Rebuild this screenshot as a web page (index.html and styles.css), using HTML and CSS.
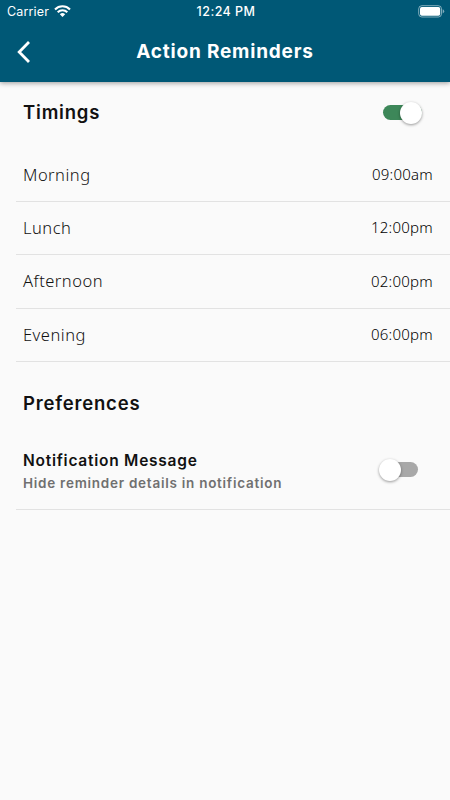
FILE: index.html
```html
<!DOCTYPE html>
<html lang="en">
<head>
    <meta charset="UTF-8">
    <meta name="viewport" content="width=device-width, initial-scale=1.0">
    <title>Action Reminders</title>
    <link rel="stylesheet" href="styles.css">
</head>
<body>
    <header class="header">
        <div class="status-bar">
            <div class="carrier">
                <span class="carrier-name">Carrier</span>
                <svg class="wifi" width="17" height="12" viewBox="0 0 17 12" fill="none" stroke="#fff" stroke-width="2.1">
                    <path d="M1 4.4C5.2 .2 11.8 .2 16 4.4"/>
                    <path d="M3.7 7.2C6.4 4.5 10.6 4.5 13.3 7.2"/>
                    <path d="M8.5 12L5.8 9.2Q8.5 7 11.2 9.2Z" fill="#fff" stroke="none"/>
                </svg>
            </div>
            <span class="clock">12:24 PM</span>
            <svg class="battery" width="27" height="13" viewBox="0 0 27 13">
                <rect x=".7" y=".7" width="22.8" height="11.3" rx="3.2" fill="none" stroke="#fff" stroke-opacity=".5"/>
                <rect x="2" y="2" width="20.2" height="8.7" rx="1.8" fill="#fff"/>
                <path d="M24.7 4.3Q26.2 5 26.2 6.3T24.7 8.4Z" fill="#fff" fill-opacity=".5"/>
            </svg>
        </div>
        <div class="nav-bar">
            <svg class="back" width="16" height="24" viewBox="0 0 16 24" fill="none" stroke="#fff" stroke-width="2.8">
                <path d="M13 2L3.2 12L13 22"/>
            </svg>
            <h1>Action Reminders</h1>
        </div>
    </header>
    <main>
        <div class="section-head">
            <h2>Timings</h2>
            <div class="switch on"><span class="knob"></span></div>
        </div>
        <ul class="times">
            <li><span class="label">Morning</span><span class="time">09:00am</span></li>
            <li><span class="label">Lunch</span><span class="time">12:00pm</span></li>
            <li><span class="label">Afternoon</span><span class="time">02:00pm</span></li>
            <li><span class="label">Evening</span><span class="time">06:00pm</span></li>
        </ul>
        <div class="section-head preferences-head">
            <h2>Preferences</h2>
        </div>
        <div class="preference">
            <div>
                <h3>Notification Message</h3>
                <p>Hide reminder details in notification</p>
            </div>
            <div class="switch"><span class="knob"></span></div>
        </div>
    </main>
</body>
</html>
```

FILE: styles.css
```css
* {
    box-sizing: border-box;
}

body {
    margin: 0;
    min-height: 100vh;
    background-color: #fafafa;
    color: #111;
    font-family: Inter, sans-serif;
}

h1, h2, h3, p, ul {
    margin: 0;
    padding: 0;
}

.header {
    height: 82px;
    background-color: #005876;
    color: #fff;
    box-shadow: 0 1px 5px rgba(0, 0, 0, 0.4);
}

.status-bar {
    display: grid;
    grid-template-columns: 1fr auto 1fr;
    align-items: center;
    height: 22px;
    padding: 0 5px 0 7px;
}

.carrier {
    display: flex;
    align-items: center;
    gap: 5px;
}

.carrier-name {
    font-size: 12.5px;
    letter-spacing: 0.15px;
}

.clock {
    font-size: 12.5px;
    font-weight: 500;
    letter-spacing: 0.45px;
}

.battery {
    justify-self: end;
}

.nav-bar {
    display: grid;
    grid-template-columns: 40px 1fr 40px;
    align-items: center;
    height: 60px;
    padding-bottom: 1px;
}

.back {
    margin-left: 16px;
}

h1 {
    font-size: 19px;
    font-weight: 700;
    line-height: 24px;
    letter-spacing: 0.8px;
    text-align: center;
}

.section-head {
    display: flex;
    justify-content: space-between;
    align-items: center;
    height: 66.4px;
    padding: 0 28px 7px 23px;
}

h2 {
    font-size: 18.5px;
    font-weight: 600;
    line-height: 24px;
    letter-spacing: 0.8px;
}

.switch {
    display: flex;
    align-items: center;
    width: 36px;
    height: 15px;
    border-radius: 8px;
    background-color: #a8a8a8;
}

.knob {
    width: 22px;
    height: 22px;
    flex-shrink: 0;
    margin-left: -3px;
    border-radius: 50%;
    background-color: #fff;
    box-shadow: 0 1px 3px rgba(0, 0, 0, 0.4);
}

.switch.on {
    justify-content: flex-end;
    width: 39px;
    margin-top: 2px;
    background-color: #3d8759;
}

.times {
    list-style: none;
}

.times li {
    display: flex;
    justify-content: space-between;
    align-items: center;
    height: 53.4px;
    margin-left: 16px;
    padding: 0 17px 1px 7px;
    border-bottom: 1px solid #e2e2e2;
    font-family: "Noto Sans", sans-serif;
    font-weight: 300;
}

.label {
    font-size: 16.5px;
    letter-spacing: 0.5px;
}

.time {
    color: #000;
    font-size: 15px;
    letter-spacing: 0.25px;
}

.preferences-head {
    height: 76px;
    padding-top: 14px;
}

.preference {
    display: flex;
    justify-content: space-between;
    align-items: center;
    height: 72px;
    margin-left: 16px;
    padding: 0 32px 2px 7px;
    border-bottom: 1px solid #e2e2e2;
}

.preference .switch {
    margin-bottom: 5px;
}

h3 {
    font-size: 15.5px;
    font-weight: 600;
    line-height: 22px;
    letter-spacing: 0.75px;
}

.preference p {
    color: #707070;
    font-size: 13.5px;
    font-weight: 600;
    line-height: 22px;
    letter-spacing: 0.74px;
}
```
